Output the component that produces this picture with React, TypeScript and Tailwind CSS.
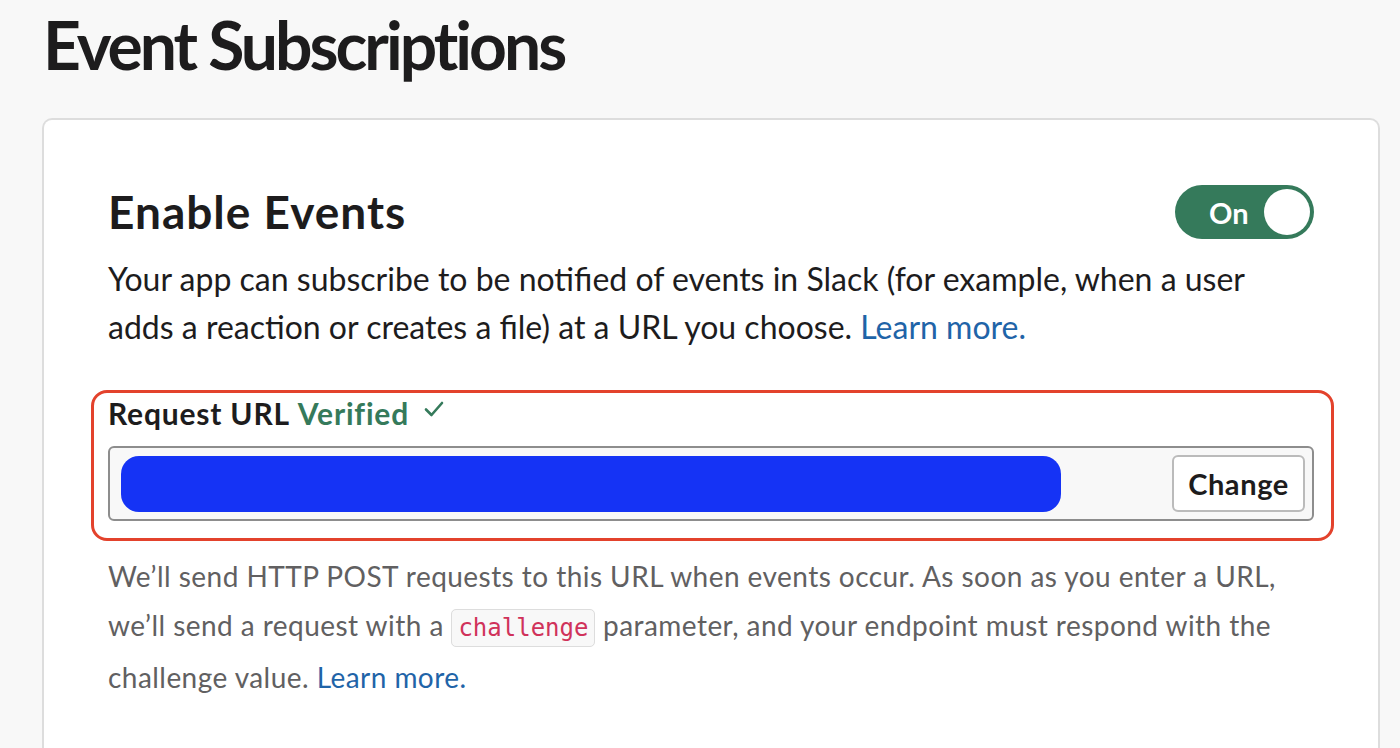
const font = { fontFamily: 'Lato, "Noto Sans", sans-serif' }

function Toggle() {
  return (
    <div className="flex h-[54px] w-[139px] items-center justify-between rounded-full bg-[#357a5b] pl-[34px] pr-[4px]">
      <span className="text-[29px] font-bold leading-none text-white">On</span>
      <span className="h-[46px] w-[46px] rounded-full bg-white" />
    </div>
  )
}

function CheckMark() {
  return (
    <svg width="20" height="17" viewBox="0 0 20 17" fill="none" className="ml-[15px] mt-[8px]">
      <polyline points="2,8.5 7.5,14 18,2" stroke="#357a5b" strokeWidth="2.6" strokeLinecap="round" strokeLinejoin="round" />
    </svg>
  )
}

export default function App() {
  return (
    <div className="h-[748px] overflow-hidden bg-[#f8f8f8] text-[#1d1c1d]" style={font}>
      <div className="pl-[42px] pt-[5px]">
        <h1 className="ml-[1px] text-[66px] font-bold leading-[80px] tracking-[-3px]">Event Subscriptions</h1>
        <div className="mt-[33px] min-h-[700px] w-[1338px] rounded-t-[10px] border-2 border-b-0 border-[#dddddd] bg-white px-[64px] pt-[60px]">
          <div className="flex items-center justify-between">
            <h2 className="text-[46px] font-bold leading-[64px] tracking-[1px]">Enable Events</h2>
            <Toggle />
          </div>
          <p className="mt-[11px] max-w-[1170px] text-[32px] leading-[48px]">
            Your app can subscribe to be notified of events in Slack (for example, when a user adds a reaction or creates a file) at a URL you choose.{' '}
            <a className="text-[#1f64a8]">Learn more.</a>
          </p>
          <div className="-ml-[17px] -mr-[20px] mt-[39px] rounded-[16px] border-[3px] border-[#e3422c] pb-[17px] pl-[14px] pr-[17px]">
            <div className="flex items-start">
              <span className="text-[30px] font-bold leading-[40px] tracking-[0.8px]">Request URL</span>
              <span className="ml-[8px] text-[30px] font-bold leading-[40px] tracking-[0.8px] text-[#357a5b]">Verified</span>
              <CheckMark />
            </div>
            <div className="mt-[13px] flex h-[75px] items-center justify-between rounded-[6px] border-2 border-[#8d8d8d] bg-[#f8f8f8] pl-[11px] pr-[7px]">
              <div className="h-[56px] w-[940px] rounded-[18px] bg-[#1533f5]" />
              <button className="flex h-[57px] w-[133px] items-center justify-center rounded-[6px] border-2 border-[#bbbbbb] bg-white text-[29px] font-bold tracking-[0.6px]">
                Change
              </button>
            </div>
          </div>
          <p className="mt-[11px] text-[28px] leading-[49px] tracking-[0.45px] text-[#616061]">
            We’ll send HTTP POST requests to this URL when events occur. As soon as you enter a URL, we’ll send a request with a{' '}
            <code
              className="rounded-[5px] border border-[#dddddd] bg-[#f8f8f8] px-[6px] py-[4px] text-[24px] tracking-normal text-[#d0325a]"
              style={{ fontFamily: '"DejaVu Sans Mono", monospace' }}
            >
              challenge
            </code>{' '}
            parameter, and your endpoint must respond with the challenge value.{' '}
            <a className="text-[#1f64a8]">Learn more.</a>
          </p>
        </div>
      </div>
    </div>
  )
}
